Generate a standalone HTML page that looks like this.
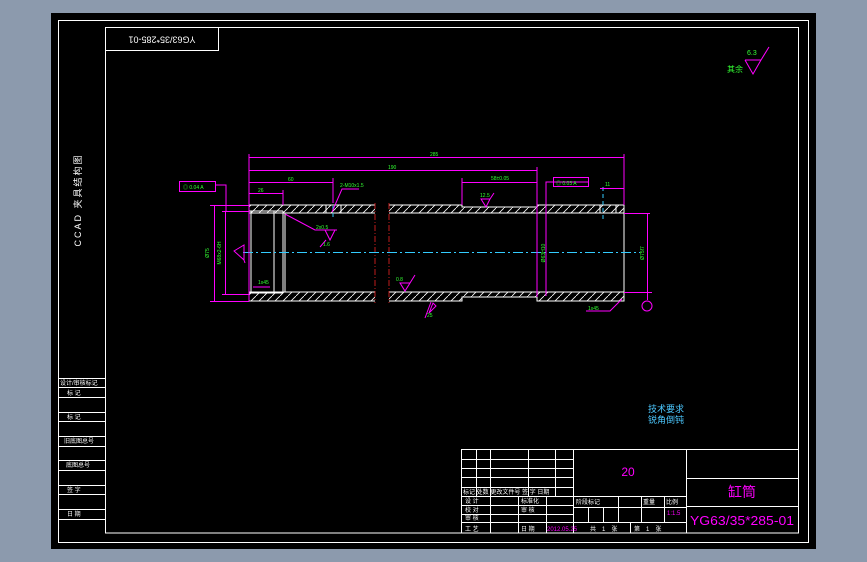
<!DOCTYPE html>
<html><head><meta charset="utf-8"><style>
html,body{margin:0;padding:0;background:#8c9aad;}
svg{display:block}
text{font-family:"Liberation Sans","Noto Sans CJK SC",sans-serif;}
</style></head><body>
<svg width="867" height="562" viewBox="0 0 867 562" xmlns="http://www.w3.org/2000/svg">
<defs>
<pattern id="h" width="8" height="8" patternUnits="userSpaceOnUse">
<path d="M0 8 L8 0" stroke="#fff" stroke-width="0.8"/>
</pattern>
</defs>
<rect x="0" y="0" width="867" height="562" fill="#8c9aad"/>
<rect x="51" y="13" width="765" height="536" fill="#000"/>
<g fill="none" stroke="#fff" stroke-width="1">
<rect x="58.5" y="20.5" width="750" height="522"/>
<rect x="105.5" y="27.5" width="693" height="505.5"/>
<rect x="105.5" y="27.5" width="113" height="23"/>
<path d="M58 378.5H105M58 387.5H105M58 397.5H105M58 412.5H105M58 421.5H105M58 436.5H105M58 446.5H105M58 460.5H105M58 470.5H105M58 485.5H105M58 494.5H105M58 509.5H105M58 519.5H105"/>
<rect x="461.5" y="449.5" width="337" height="83.5"/>
<path d="M461 459.5H573M461 468.5H573M461 477.5H573M461 487.5H573M461 496.5H686M461 505.5H573M461 514.5H573M461 522.5H573"/>
<path d="M476.5 449V496M490.5 449V533M528.5 449V496M555.5 449V496M573.5 449V533M518.5 496V533M546.5 496V533"/>
<path d="M573 507.5H686M573 522.5H686M588.5 507V522M603.5 507V522M618.5 496V522M641.5 496V522M664.5 496V522M630.5 522V533M686.5 449V533M686 478.5H799M686 506.5H799"/>
</g>
<text transform="translate(162,39) rotate(180)" font-size="9" fill="#fff" text-anchor="middle" dominant-baseline="middle">YG63/35*285-01</text>
<text transform="translate(81,200) rotate(-90)" font-size="9" fill="#fff" text-anchor="middle" letter-spacing="2">CCAD 夹具结构图</text>
<g font-size="6" fill="#fff">
<text x="60" y="385">设计/审核标记</text><text x="67" y="395">标 记</text><text x="67" y="419">标 记</text>
<text x="64" y="443">旧底图总号</text><text x="66" y="467">底图总号</text><text x="67" y="492">签 字</text><text x="67" y="516">日 期</text>
<text x="463" y="494">标记 处数 更改文件号 签 字 日期</text>
<text x="465" y="503">设 计</text><text x="521" y="503">标准化</text>
<text x="465" y="512">校 对</text><text x="521" y="512">审 核</text>
<text x="465" y="520">审 核</text>
<text x="465" y="531">工 艺</text><text x="521" y="531">日 期</text>
<text x="576" y="504">阶段标记</text><text x="643" y="504">重量</text><text x="666" y="504">比例</text>
<text x="590" y="531">共　1　张</text><text x="634" y="531">第　1　张</text>
</g>
<text x="547" y="531" font-size="6" fill="#f0f">2012.05.25</text>
<text x="667" y="515" font-size="6" fill="#f0f">1:1.5</text>
<text x="628" y="476" font-size="12" fill="#f0f" text-anchor="middle">20</text>
<text x="742" y="497" font-size="14" fill="#f0f" text-anchor="middle">缸筒</text>
<text x="742" y="525" font-size="13" fill="#f0f" text-anchor="middle" textLength="104" lengthAdjust="spacingAndGlyphs">YG63/35*285-01</text>
<text x="648" y="412" font-size="9" fill="#4cc8ff">技术要求</text>
<text x="648" y="423" font-size="9" fill="#4cc8ff">锐角倒钝</text>
<text x="727" y="72" font-size="8" fill="#3f3">其余</text>
<text x="747" y="55" font-size="7" fill="#3f3">6.3</text>
<path d="M745 60H761L753 74L745 60M761 60L769 47" stroke="#f0f" fill="none"/>
<g>
<rect x="249" y="205" width="126" height="8" fill="url(#h)"/>
<rect x="389" y="205" width="73" height="8" fill="url(#h)"/>
<rect x="462" y="207" width="75" height="6" fill="url(#h)"/>
<rect x="537" y="205" width="87" height="8" fill="url(#h)"/>
<rect x="249" y="292" width="126" height="9" fill="url(#h)"/>
<rect x="389" y="292" width="73" height="9" fill="url(#h)"/>
<rect x="462" y="292" width="75" height="5" fill="url(#h)"/>
<rect x="537" y="292" width="87" height="9" fill="url(#h)"/>
<g fill="none" stroke="#fff" stroke-width="1">
<path d="M249 205H375M389 205H462V207H537V205H624V301H537V297H462V301H389M375 301H249V205"/>
<path d="M249 213H375M389 213H624M249 292H375M389 292H624"/>
<path d="M251 211V293M274 211V293M283 211V293M285 213V292M249 211H283M249 293H283"/>
<path d="M326 205V213M341 205V213M600 205V213M616 205V213"/>
</g>
</g>
<path d="M375 203V303M389 203V303" stroke="#e22" stroke-width="0.8" stroke-dasharray="6 2 1 2" fill="none"/>
<path d="M243 252.5H640" stroke="#3cf" stroke-dasharray="10 3 2 3" fill="none"/>
<path d="M333 192V220M603 187V222" stroke="#3cf" stroke-dasharray="4 3" fill="none"/>
<g fill="none" stroke="#f0f" stroke-width="1">
<path d="M249 154V301M624 154V205M537 167V297M462 178V205M333 178V203M283 190V205"/>
<path d="M249 157.5H624M249 170.5H537M249 182.5H333M462 182.5H537M249 193.5H283M600 188.5H624"/>
<path d="M210 205.5H249M210 301.5H249M214.5 205V301M222 211.5H249M222 294.5H249M225.5 211V295"/>
<path d="M624 213.5H650M624 292.5H652M647.5 213V300"/>
<circle cx="647" cy="306" r="5"/>
<path d="M215 185H226V211M588 182H546V296"/>
<rect x="179.5" y="181.5" width="36" height="10"/>
<rect x="553.5" y="177.5" width="35" height="9"/>
<path d="M234 251L244 245V260Z M244 260L245 263"/>
<path d="M332 212L342 189H359M285 214L315 230H337M325 230L330 240L335 230M320 247L326 240"/>
<path d="M400 283H410L405 291Z M410 283L415 275M481 199H490L486 207Z M490 199L494 193"/>
<path d="M433 303L429 313L436 306Z M431 302L425 318"/>
<path d="M253 287H270M586 311H610L622 299"/>
</g>
<g font-size="5" fill="#3f3">
<text x="430" y="156">285</text><text x="388" y="169">190</text><text x="288" y="181">60</text>
<text x="258" y="192">26</text><text x="605" y="186">11</text><text x="491" y="180">58±0.05</text>
<text x="340" y="187">2-M10x1.5</text><text x="316" y="229">2x0.5</text><text x="323" y="246">1.6</text>
<text x="480" y="197">12.5</text><text x="396" y="281">0.8</text><text x="427" y="317">25</text>
<text x="258" y="284">1x45</text><text x="588" y="310">1x45</text>
<text x="183" y="189">◎ 0.04 A</text><text x="556" y="185">◎ 0.03 A</text>
<text transform="translate(209,253) rotate(-90)" text-anchor="middle">Ø75</text>
<text transform="translate(221,253) rotate(-90)" text-anchor="middle">M68x2-6H</text>
<text transform="translate(545,253) rotate(-90)" text-anchor="middle">Ø63H10</text>
<text transform="translate(644,253) rotate(-90)" text-anchor="middle">Ø75f7</text>
</g>
</svg>
</body></html>
